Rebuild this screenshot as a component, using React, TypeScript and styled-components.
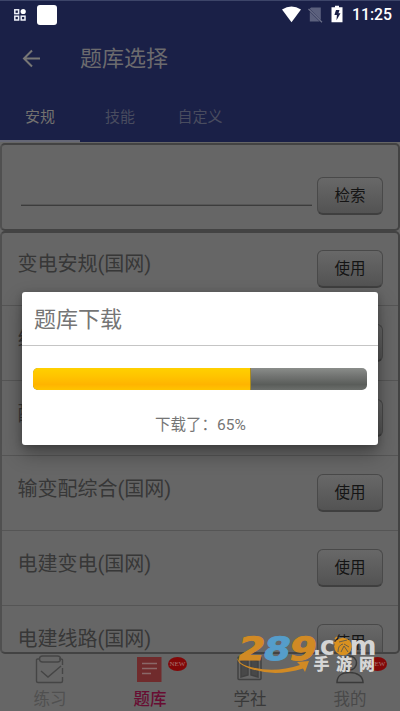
import React from 'react';
import styled, { createGlobalStyle } from 'styled-components';

const Global = createGlobalStyle`
  *{box-sizing:border-box}
  body{margin:0;background:#666;font-family:Roboto,"Noto Sans CJK SC",sans-serif;overflow:hidden}
  svg{display:block}
`;
const Screen = styled.div`
  position:relative;width:400px;height:711px;overflow:hidden;background:#666;
  display:flex;flex-direction:column;
`;
const Header = styled.header`
  height:142px;background:#1a2047;border-top:1px solid #3d4569;flex:none;
  display:flex;flex-direction:column;
`;
const StatusBar = styled.div`
  height:27px;display:flex;align-items:center;padding:0 9px 0 13px;
`;
const AppBadge = styled.div`width:20px;height:20px;border-radius:3px;background:#fff;margin-left:10px;`;
const StatusRight = styled.div`margin-left:auto;display:flex;align-items:center;`;
const Clock = styled.span`
  color:#fff;font-size:15.8px;line-height:20px;font-weight:500;width:39px;margin-left:5px;white-space:nowrap;
`;
const Toolbar = styled.div`height:61px;display:flex;align-items:center;padding-left:22px;`;
const Title = styled.h1`margin:1px 0 0 39px;font-size:22px;line-height:30px;font-weight:400;color:#6c6b6e;`;
const Tabs = styled.nav`display:flex;height:53px;`;
const Tab = styled.div<{ $active?: boolean }>`
  width:80px;text-align:center;font-size:15px;line-height:56px;
  color:${p => (p.$active ? '#74726f' : '#494c5f')};
  border-bottom:2px solid ${p => (p.$active ? '#666876' : 'transparent')};
`;
const Panel = styled.section`
  border:2px solid #434343;border-left-color:#505050;border-radius:5px;background:#666;flex:none;overflow:hidden;
`;
const SearchPanel = styled(Panel)`
  height:88px;margin-top:1px;padding:0 15px 0 19px;display:flex;align-items:center;
`;
const Field = styled.div`width:291px;height:1px;background:#3c3c3c;margin:37px 5px 0 0;box-shadow:0 -1px #565656;`;
const Button = styled.button`
  width:66px;height:38px;flex:none;padding:0;border:1px solid #494949;border-bottom:2px solid #3f3f3f;border-radius:6px;
  background:linear-gradient(#686868,#535353);color:#141414;font:400 15.5px/37px Roboto,"Noto Sans CJK SC",sans-serif;
`;
const SearchButton = styled(Button)`margin-top:17px;`;
const ListPanel = styled(Panel)`height:423px;`;
const Row = styled.div`
  height:75px;padding:0 15px 0 15.5px;border-bottom:1px solid #555;
  display:flex;align-items:center;justify-content:space-between;
  &:first-child{height:73px;padding-bottom:1px;}
`;
const RowName = styled.span`font-size:20px;line-height:28px;color:#373737;padding-bottom:9px;`;
const BottomNav = styled.nav`display:flex;height:57px;flex:none;`;
const NavItem = styled.div<{ $color: string }>`
  position:relative;width:100px;display:flex;flex-direction:column;align-items:center;color:${p => p.$color};
`;
const NavIcon = styled.svg`width:30px;height:30px;margin-top:1px;overflow:visible;`;
const NavLabel = styled.span<{ $bold?: boolean }>`
  font-size:16.5px;line-height:24px;margin-top:3px;font-weight:${p => (p.$bold ? 500 : 400)};
`;
const NewBadge = styled.span`
  position:absolute;left:68px;top:3px;width:19px;height:14px;border-radius:50%;
  background:#820808;color:#a87472;font:400 7px/14px "Liberation Serif",serif;text-align:center;
`;
const Dialog = styled.div`
  position:absolute;left:22px;top:292px;width:356px;height:153px;background:#fff;border-radius:3px;
  box-shadow:0 9px 20px rgba(0,0,0,.32),0 2px 7px rgba(0,0,0,.22);
`;
const DialogTitle = styled.h2`
  margin:0;height:54px;border-bottom:1px solid #c5c5c5;padding-left:12px;
  font-size:22px;line-height:55px;font-weight:400;color:#757575;
`;
const Track = styled.div`
  height:22px;margin:22px 11px 0;border-radius:5px;overflow:hidden;
  background:linear-gradient(#8a8d8a,#737573 35%,#5a5d5a 75%,#6b6e6b);
`;
const Fill = styled.div`
  height:100%;background:linear-gradient(#ffd000,#ffc500 35%,#ffb400 75%,#ffc400);border-right:1px solid #a88a20;
`;
const Status = styled.p`margin:23px 0 0 1px;font-size:15.5px;line-height:24px;text-align:center;color:#757575;`;
const Watermark = styled.svg`position:absolute;left:230px;top:630px;width:155px;height:50px;`;

const names = ['变电安规(国网)', '线路安规(国网)', '配电安规(国网)', '输变配综合(国网)', '电建变电(国网)', '电建线路(国网)'];
const progress = 65;

export default function App() {
  return (
    <Screen>
      <Global />
      <Header>
        <StatusBar>
          <svg width="14" height="14" viewBox="0 0 14 14" fill="none" stroke="#eef0f8" strokeWidth="1.5">
            <rect x="1.8" y="1.8" width="3.8" height="3.8" /><rect x="1.8" y="8.2" width="3.8" height="3.8" />
            <rect x="8.2" y="8.2" width="3.8" height="3.8" /><circle cx="10.2" cy="3.5" r="2.6" fill="#fff" stroke="none" />
          </svg>
          <AppBadge />
          <StatusRight>
            <svg width="69" height="22" viewBox="0 0 69 22">
              <path d="M4 5.6Q13.5 -.5 23 5.6L13.5 18.2Z" fill="#fff" />
              <path d="M33 3.5H42.8V16L31.7 4.8ZM31.8 7.8L41.7 17.5H31.8Z" fill="#5b607d" />
              <path d="M30.5 5L44 18.2" stroke="#6d718a" strokeWidth="1.2" />
              <path d="M57 1.8h4V3.2h3.5v15h-11V3.2H57Z" fill="#fff" />
              <path d="M58 6h3.5L60.5 9.2h2l-4 7 .4-5.2h-2.5Z" fill="#1a2047" />
            </svg>
            <Clock>11:25</Clock>
          </StatusRight>
        </StatusBar>
        <Toolbar>
          <svg width="19" height="20" viewBox="0 0 19 20" fill="none" stroke="#777675" strokeWidth="2"><path d="M18 9.5H2M10 1.5L2 9.5L10 17.5" /></svg>
          <Title>题库选择</Title>
        </Toolbar>
        <Tabs><Tab $active>安规</Tab><Tab>技能</Tab><Tab>自定义</Tab></Tabs>
      </Header>
      <SearchPanel><Field /><SearchButton>检索</SearchButton></SearchPanel>
      <ListPanel>
        {names.map(name => <Row key={name}><RowName>{name}</RowName><Button>使用</Button></Row>)}
      </ListPanel>
      <BottomNav>
        <NavItem $color="#505050">
          <NavIcon viewBox="0 0 30 30" fill="none" stroke="#454545" strokeWidth="1.4">
            <path d="M5 4H2.5Q1.5 4 1.5 5V26Q1.5 27.5 3 27.5H26Q27.5 27.5 27.5 26V22M27.5 19V13M27.5 10V5Q27.5 4 26 4H24" />
            <rect x="4.5" y="1" width="21" height="6" rx="3" /><path d="M6 16L13 22L26 11" />
          </NavIcon><NavLabel>练习</NavLabel>
        </NavItem>
        <NavItem $color="#680d32">
          <NavIcon viewBox="0 0 30 30"><path d="M2 2H26.5V27H2Z" fill="#702b2c" /><path d="M7 8.5H22M7 13.5H22M7 18.5H16" stroke="#8a6868" strokeWidth="1.6" /></NavIcon>
          <NavLabel $bold>题库</NavLabel><NewBadge>NEW</NewBadge>
        </NavItem>
        <NavItem $color="#393939">
          <NavIcon viewBox="0 0 30 30" fill="none" stroke="#414141" strokeWidth="1.5">
            <rect x="3" y="2" width="23" height="22.5" rx="1" /><path d="M6 6L13 4.5V20L6 22ZM16 4.5L23 6V22L16 20Z" fill="#484848" />
          </NavIcon><NavLabel>学社</NavLabel>
        </NavItem>
        <NavItem $color="#494949">
          <NavIcon viewBox="0 0 30 30" fill="none" stroke="#3a3a3a" strokeWidth="1.5">
            <circle cx="14.5" cy="8" r="7" /><path d="M2 27.5C2 21 7 17.5 14.5 17.5S28 21 28 27.5Z" />
          </NavIcon><NavLabel>我的</NavLabel><NewBadge>NEW</NewBadge>
        </NavItem>
      </BottomNav>
      <Dialog role="dialog">
        <DialogTitle>题库下载</DialogTitle>
        <Track><Fill style={{ width: `${progress + 0.3}%` }} /></Track>
        <Status>下载了：{progress}%</Status>
      </Dialog>
      <Watermark viewBox="0 0 155 50">
        <g fontFamily="DejaVu Sans, sans-serif" fontWeight="bold" fontSize="32" strokeWidth="1">
          <g transform="translate(6 30) skewX(-12)">
            <text x="0" textLength="27" lengthAdjust="spacingAndGlyphs" fill="#d18a24" stroke="#d18a24">2</text>
            <text x="25.5" textLength="27" lengthAdjust="spacingAndGlyphs" fill="#559dca" stroke="#559dca">8</text>
            <text x="51.5" textLength="27" lengthAdjust="spacingAndGlyphs" fill="#d18a24" stroke="#d18a24">9</text>
          </g>
        </g>
        <path d="M7 28Q9 33 17 36Q43 44 70 35L67 32L79 31L75 42L73 38.5Q42 48 16 37Q7 33 7 28Z" fill="#d18a24" />
        <g fill="#d4d4d4" fontFamily="DejaVu Sans, sans-serif" fontWeight="bold" fontSize="27">
          <text x="83" y="25" textLength="8" lengthAdjust="spacingAndGlyphs">.</text>
          <text x="90" y="25" textLength="15" lengthAdjust="spacingAndGlyphs">c</text>
          <text x="119.5" y="25" textLength="27" lengthAdjust="spacingAndGlyphs">m</text>
        </g>
        <circle cx="113" cy="16.5" r="8.8" fill="#d99120" />
        <path d="M108 22Q108 15 113 14M111 22L114 16L118 22M109 12L117 10M114 14L119 17" fill="none" stroke="#6b5e45" strokeWidth="1" />
        <path d="M105 9l2-2M107 12l-3 1" stroke="#d99120" strokeWidth="1.5" />
        <g fill="#d6d6d6" fontFamily="Noto Sans CJK SC, sans-serif" fontWeight="900" fontSize="16">
          <text x="83.5" y="39.5">手</text><text x="106" y="39.5">游</text><text x="129" y="39.5">网</text>
        </g>
      </Watermark>
    </Screen>
  );
}
